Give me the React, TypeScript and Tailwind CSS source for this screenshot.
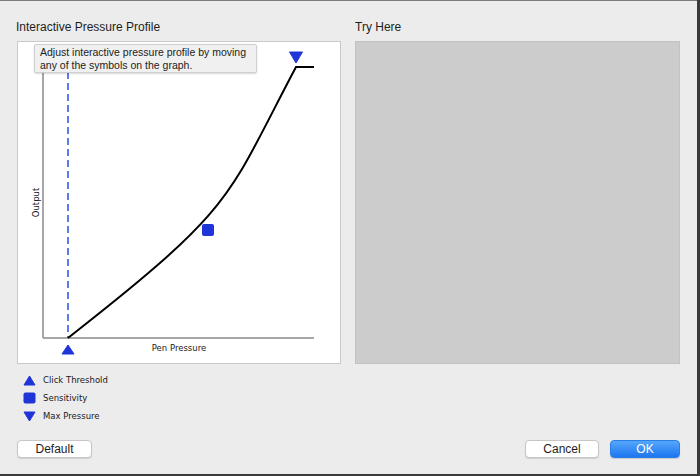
import React from 'react'

const BLUE = '#1f35d8'

const TriangleUp: React.FC<{ className?: string }> = ({ className }) => (
  <svg width="13" height="11" viewBox="0 0 13 11" className={className}>
    <polygon points="1,10 12,10 6.5,1" fill={BLUE} stroke={BLUE} strokeWidth="1" strokeLinejoin="round" />
  </svg>
)

const TriangleDown: React.FC<{ className?: string }> = ({ className }) => (
  <svg width="13" height="11" viewBox="0 0 13 11" className={className}>
    <polygon points="1,1 12,1 6.5,10" fill={BLUE} stroke={BLUE} strokeWidth="1" strokeLinejoin="round" />
  </svg>
)

const Square: React.FC = () => (
  <svg width="13" height="12" viewBox="0 0 13 12">
    <rect x="0.5" y="0.5" width="12" height="11" rx="2" fill={BLUE} />
  </svg>
)

const PressureGraph: React.FC = () => (
  <div className="relative h-[323px] w-[324px] border border-[#c9c9c9] bg-white">
    <svg width="322" height="321" className="absolute left-0 top-0">
      {/* axes */}
      <line x1="25" y1="25" x2="25" y2="296" stroke="#8a8a8a" strokeWidth="1.5" />
      <line x1="25" y1="296" x2="296" y2="296" stroke="#8a8a8a" strokeWidth="1.5" />
      {/* click threshold guide */}
      <line x1="50" y1="30" x2="50" y2="296" stroke="#2b4fe6" strokeWidth="1.5" strokeDasharray="7 4" />
      {/* curve */}
      <path d="M50,296 C220,163 208,157 278,25 L296,25" fill="none" stroke="#000" strokeWidth="2" />
      {/* handles */}
      <polygon points="271.5,10 284.5,10 278,21" fill={BLUE} stroke={BLUE} strokeLinejoin="round" />
      <rect x="184" y="182" width="12" height="12" rx="2" fill={BLUE} />
      <polygon points="44,312 56,312 50,303" fill={BLUE} stroke={BLUE} strokeLinejoin="round" />
      {/* labels */}
      <text
        x="161"
        y="309"
        textAnchor="middle"
        fontSize="8.5"
        fill="#1a1a1a"
        style={{ fontFamily: '"DejaVu Sans", sans-serif' }}
      >
        Pen Pressure
      </text>
      <text
        x="0"
        y="0"
        textAnchor="middle"
        fontSize="8.5"
        fill="#1a1a1a"
        transform="translate(20.5,160.5) rotate(-90)"
        style={{ fontFamily: '"DejaVu Sans", sans-serif' }}
      >
        Output
      </text>
    </svg>

    {/* Tooltip */}
    <div className="absolute left-[16px] top-[2px] h-[29px] w-[223px] whitespace-nowrap rounded-[2px] border border-[#cfcfcf] bg-[#f0f0f0] px-[5px] pt-[1px] text-[10.5px] leading-[13px] text-[#222] shadow-[0_1px_2px_rgba(0,0,0,0.15)]">
      Adjust interactive pressure profile by moving
      <br />
      any of the symbols on the graph.
    </div>
  </div>
)

const legend = [
  { icon: <TriangleUp />, label: 'Click Threshold' },
  { icon: <Square />, label: 'Sensitivity' },
  { icon: <TriangleDown />, label: 'Max Pressure' },
]

export default function App() {
  return (
    <div className="h-[476px] w-[700px] overflow-hidden bg-[#3a3a3a] [font-family:'Liberation_Sans',Arial,sans-serif]">
      <div className="flex h-[474px] w-[697px] flex-col border-t border-[#7a7a7a] bg-[#ececec] pl-[17px] pt-[19px]">
        <div className="flex gap-[14px]">
          {/* Left column */}
          <div className="flex flex-col">
            <h2 className="-ml-[1px] h-[14px] text-[12px] leading-[14px] text-[#1e1e1e]">Interactive Pressure Profile</h2>
            <div className="mt-[7px]">
              <PressureGraph />
            </div>
          </div>

          {/* Right column */}
          <div className="flex flex-col">
            <h2 className="h-[14px] text-[12px] leading-[14px] text-[#1e1e1e]">Try Here</h2>
            <div className="mt-[7px] h-[323px] w-[325px] border border-[#c2c2c2] bg-[#cccccc]" />
          </div>
        </div>

        {/* Legend */}
        <div className="mt-[7px] flex flex-col pl-[6px]">
          {legend.map(item => (
            <div key={item.label} className="flex h-[18px] items-center gap-[7px]">
              <div className="flex w-[13px] items-center justify-center">{item.icon}</div>
              <span className="text-[8.5px] text-[#1a1a1a] [font-family:'DejaVu_Sans',sans-serif]">{item.label}</span>
            </div>
          ))}
        </div>

        {/* Buttons */}
        <div className="mt-[15px] flex items-center pr-[17px]">
          <button className="h-[18px] w-[75px] rounded-[4px] border border-[#c6c6c6] bg-white text-[12px] leading-[16px] text-[#1e1e1e] shadow-[0_1px_1px_rgba(0,0,0,0.12)]">
            Default
          </button>
          <div className="flex-1" />
          <button className="h-[18px] w-[74px] rounded-[4px] border border-[#c6c6c6] bg-white text-[12px] leading-[16px] text-[#1e1e1e] shadow-[0_1px_1px_rgba(0,0,0,0.12)]">
            Cancel
          </button>
          <button className="ml-[11px] h-[18px] w-[70px] rounded-[4px] border border-[#2a7ee8] bg-gradient-to-b from-[#55a6fa] to-[#1b76f0] text-[12px] leading-[16px] text-white shadow-[0_1px_1px_rgba(0,0,0,0.15)]">
            OK
          </button>
        </div>
      </div>
    </div>
  )
}
